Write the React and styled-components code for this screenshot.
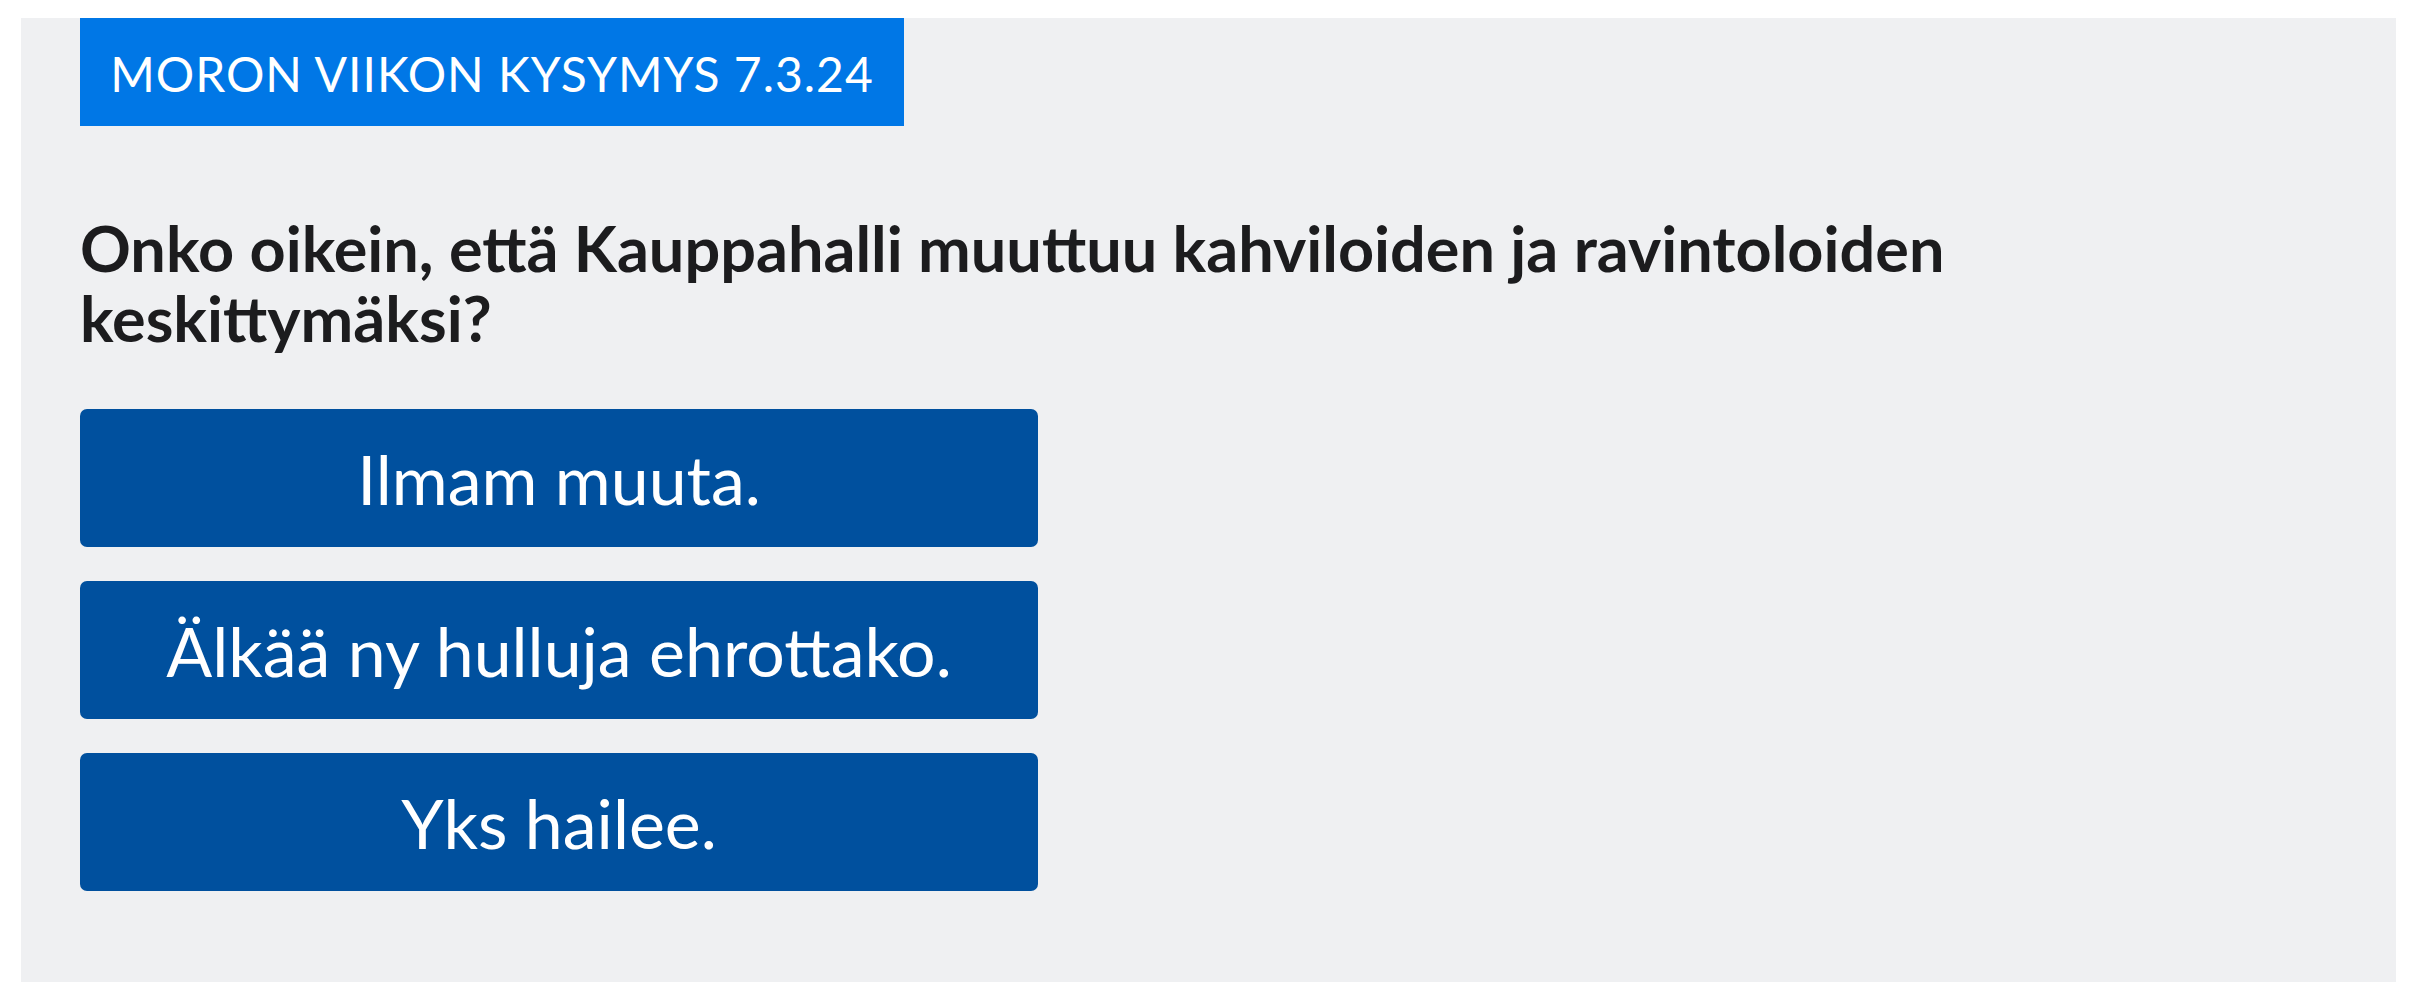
import React from "react";
import styled, { createGlobalStyle } from "styled-components";

const GlobalStyle = createGlobalStyle`
  html, body {
    margin: 0;
    padding: 0;
    background: #ffffff;
  }
  body {
    font-family: "Lato", "Open Sans", sans-serif;
  }
`;

const answers = ["Ilmam muuta.", "Älkää ny hulluja ehrottako.", "Yks hailee."];

const App = () => {
  return (
    <Page>
      <GlobalStyle />
      <Panel>
        <Badge>MORON VIIKON KYSYMYS 7.3.24</Badge>
        <Question>
          Onko oikein, että Kauppahalli muuttuu kahviloiden ja ravintoloiden
          <br />
          keskittymäksi?
        </Question>
        <Answers>
          {answers.map((answer) => (
            <AnswerButton key={answer}>{answer}</AnswerButton>
          ))}
        </Answers>
      </Panel>
    </Page>
  );
};

const Page = styled.div`
  padding: 18px 18px 18px 21px;
`;

const Panel = styled.section`
  display: flex;
  flex-direction: column;
  align-items: flex-start;
  box-sizing: border-box;
  height: 964px;
  padding: 0 59px;
  background: #eff0f2;
`;

const Badge = styled.div`
  display: flex;
  align-items: center;
  justify-content: center;
  box-sizing: border-box;
  width: 824px;
  height: 108px;
  padding-top: 2px;
  background: #0077e6;
  color: #ffffff;
  font-size: 48px;
  letter-spacing: 1px;
`;

const Question = styled.h2`
  margin: 87px 0 0;
  font-size: 63px;
  line-height: 70px;
  font-weight: 700;
  color: #1c1c1e;
`;

const Answers = styled.div`
  display: flex;
  flex-direction: column;
  gap: 34px;
  margin-top: 56px;
`;

const AnswerButton = styled.button`
  display: flex;
  align-items: center;
  justify-content: center;
  width: 958px;
  height: 138px;
  padding: 0;
  border: none;
  border-radius: 7px;
  background: #00509e;
  color: #ffffff;
  font-family: "Lato", "Open Sans", sans-serif;
  font-size: 68px;
  cursor: pointer;
`;

export default App;
